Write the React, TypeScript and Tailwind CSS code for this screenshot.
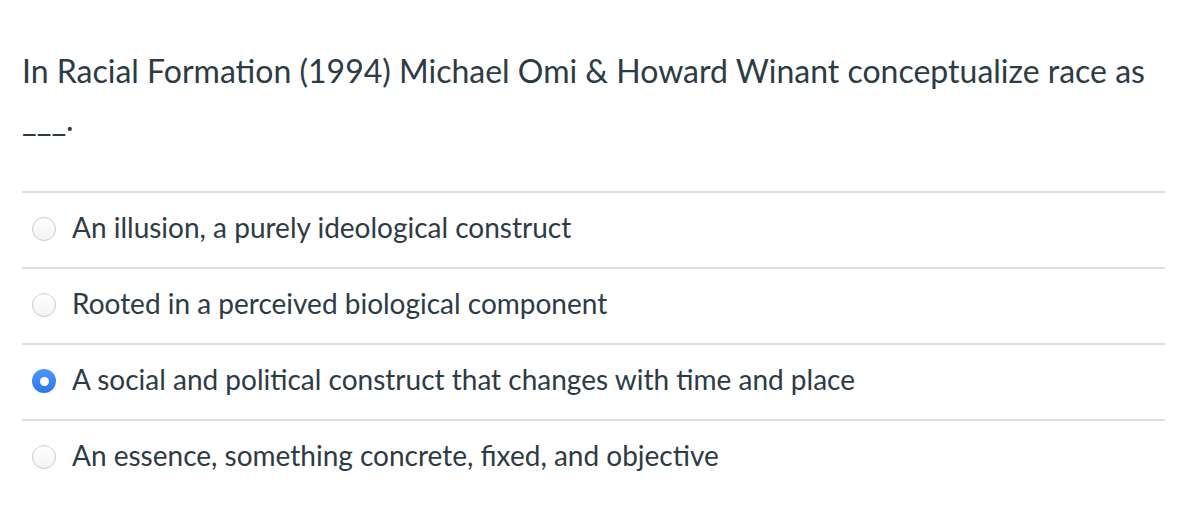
import React from "react"

const options = [
  { id: 1, text: "An illusion, a purely ideological construct", checked: false },
  { id: 2, text: "Rooted in a perceived biological component", checked: false },
  { id: 3, text: "A social and political construct that changes with time and place", checked: true },
  { id: 4, text: "An essence, something concrete, fixed, and objective", checked: false },
]

function Radio({ checked }: { checked: boolean }) {
  if (checked) {
    return (
      <span className="flex h-[24px] w-[24px] shrink-0 items-center justify-center rounded-full bg-gradient-to-b from-[#4d97f8] to-[#2b76ee]">
        <span className="h-[9px] w-[9px] rounded-full bg-white" />
      </span>
    )
  }
  return (
    <span className="h-[24px] w-[24px] shrink-0 rounded-full border border-[#cbcbcb] bg-gradient-to-b from-white to-[#f3f3f3]" />
  )
}

export default function App() {
  return (
    <div className="min-h-screen bg-white font-['Lato','Noto_Sans',sans-serif] text-[#2d3b45]">
      <div className="pl-[22px] pr-[17px]">
        <p className="pt-[47px] pb-[48px] text-[32px] leading-[48px]">
          In Racial Formation (1994) Michael Omi &amp; Howard Winant conceptualize race as ___.
        </p>
        <div>
          {options.map((o) => (
            <div key={o.id} className="flex h-[76px] items-center border-t-2 border-[#dedede] pl-[10px] pb-[2px]">
              <Radio checked={o.checked} />
              <span className="ml-[16px] mb-[5px] text-[28px]">{o.text}</span>
            </div>
          ))}
        </div>
      </div>
    </div>
  )
}
